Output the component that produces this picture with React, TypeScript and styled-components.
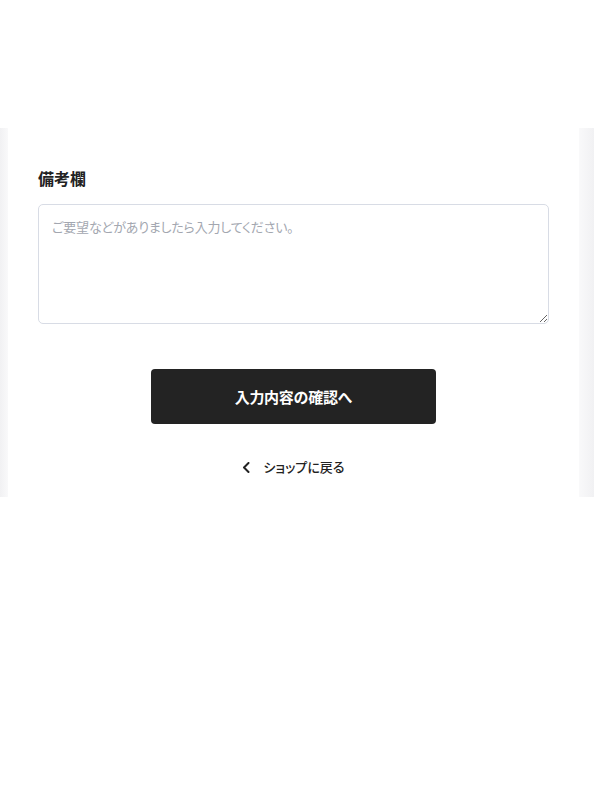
import React from "react";
import styled, { createGlobalStyle } from "styled-components";

const Global = createGlobalStyle`
  html, body { margin: 0; padding: 0; background: #ffffff; }
  body {
    font-family: "Noto Sans CJK JP", "Noto Sans", sans-serif;
    color: #222222;
  }
  * { box-sizing: border-box; }
`;

const Page = styled.div`
  padding-top: 128px;
  width: 594px;
`;

const Frame = styled.section`
  padding: 0 15px 0 8px;
  background: linear-gradient(
    to right,
    #f1f1f3 0px,
    #f9f9fa 8px,
    #ffffff 8px,
    #ffffff calc(100% - 15px),
    #f9f9fa calc(100% - 15px),
    #f1f1f3 100%
  );
`;

const Card = styled.div`
  background: #ffffff;
  padding: 38px 30px 20px;
  display: flex;
  flex-direction: column;
`;

const Label = styled.label`
  font-size: 16px;
  line-height: 24px;
  font-weight: 700;
  color: #222222;
  margin-bottom: 14px;
`;

const Notes = styled.textarea`
  width: 100%;
  height: 120px;
  padding: 12px 13px;
  border: 1px solid #d8dce5;
  border-radius: 5px;
  font-family: "Noto Sans CJK JP", "Noto Sans", sans-serif;
  font-size: 13px;
  line-height: 20px;
  letter-spacing: -0.2px;
  font-feature-settings: "palt";
  color: #222222;
  background: #ffffff;
  outline: none;
  &::placeholder {
    color: #a3a7b0;
  }
`;

const Actions = styled.div`
  display: flex;
  flex-direction: column;
  align-items: center;
  margin-top: 45px;
`;

const SubmitButton = styled.button`
  width: 285px;
  height: 55px;
  border: none;
  border-radius: 4px;
  background: #232323;
  color: #ffffff;
  font-family: "Noto Sans CJK JP", "Noto Sans", sans-serif;
  font-size: 15px;
  font-weight: 700;
  letter-spacing: -0.3px;
  cursor: pointer;
`;

const BackLink = styled.a`
  margin-top: 33px;
  display: inline-flex;
  align-items: center;
  gap: 13px;
  font-size: 13px;
  line-height: 20px;
  font-weight: 500;
  font-feature-settings: "palt";
  color: #222222;
  text-decoration: none;
`;

const Chevron = () => (
  <svg width="8" height="11" viewBox="0 0 8 11" aria-hidden="true">
    <path d="M6.5 1 L2 5.5 L6.5 10" fill="none" stroke="#222" strokeWidth="2" strokeLinecap="round" strokeLinejoin="round" />
  </svg>
);

export default function App() {
  return (
    <Page>
      <Global />
      <Frame>
        <Card>
          <Label htmlFor="notes">備考欄</Label>
          <Notes id="notes" placeholder="ご要望などがありましたら入力してください。" />
          <Actions>
            <SubmitButton type="button">入力内容の確認へ</SubmitButton>
            <BackLink href="#">
              <Chevron />
              ショップに戻る
            </BackLink>
          </Actions>
        </Card>
      </Frame>
    </Page>
  );
}
